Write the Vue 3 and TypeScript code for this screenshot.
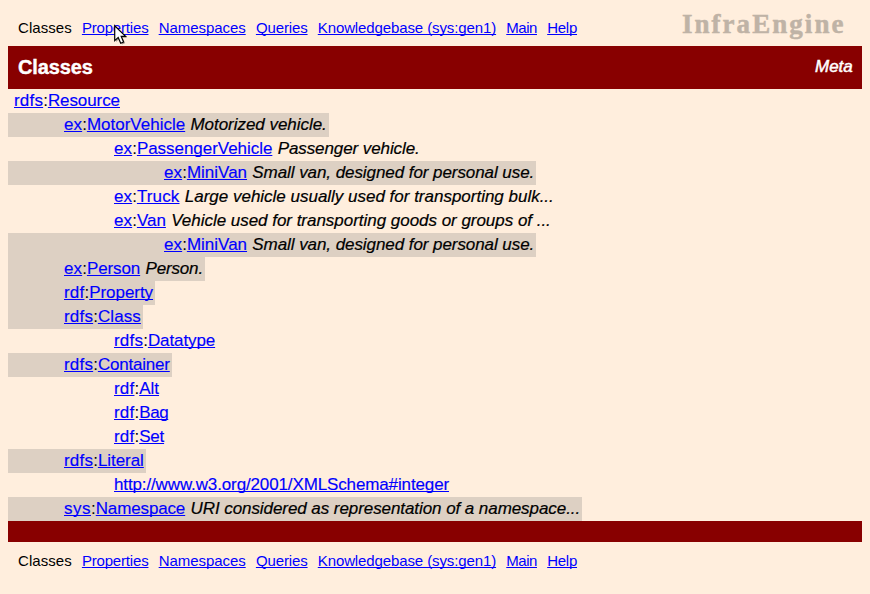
<script setup lang="ts">
interface NavItem {
  label: string
  tracking: number
  current?: boolean
}

interface ClassRow {
  prefix?: string
  name: string
  level: number
  tracking?: number
  comment?: string
  commentTracking?: number
}

const navItems: NavItem[] = [
  { label: 'Classes', tracking: 0.05, current: true },
  { label: 'Properties', tracking: -0.18 },
  { label: 'Namespaces', tracking: -0.05 },
  { label: 'Queries', tracking: -0.12 },
  { label: 'Knowledgebase (sys:gen1)', tracking: -0.11 },
  { label: 'Main', tracking: -0.45 },
  { label: 'Help', tracking: -0.25 },
]

const prefixTracking: Record<string, number> = { rdfs: 0.2, rdf: 0.2, ex: 0.1, sys: 0.5 }

const rows: ClassRow[] = [
  { prefix: 'rdfs', name: 'Resource', level: 0, tracking: -0.08 },
  { prefix: 'ex', name: 'MotorVehicle', level: 1, comment: 'Motorized vehicle.', commentTracking: -0.04 },
  { prefix: 'ex', name: 'PassengerVehicle', level: 2, tracking: -0.04, comment: 'Passenger vehicle.', commentTracking: -0.09 },
  { prefix: 'ex', name: 'MiniVan', level: 3, comment: 'Small van, designed for personal use.', commentTracking: -0.07 },
  { prefix: 'ex', name: 'Truck', level: 2, tracking: 0.15, comment: 'Large vehicle usually used for transporting bulk...', commentTracking: -0.01 },
  { prefix: 'ex', name: 'Van', level: 2, comment: 'Vehicle used for transporting goods or groups of ...', commentTracking: -0.03 },
  { prefix: 'ex', name: 'MiniVan', level: 3, comment: 'Small van, designed for personal use.', commentTracking: -0.07 },
  { prefix: 'ex', name: 'Person', level: 1, tracking: -0.1, comment: 'Person.', commentTracking: -0.15 },
  { prefix: 'rdf', name: 'Property', level: 1, tracking: -0.05 },
  { prefix: 'rdfs', name: 'Class', level: 1, tracking: 0.1 },
  { prefix: 'rdfs', name: 'Datatype', level: 2, tracking: -0.1 },
  { prefix: 'rdfs', name: 'Container', level: 1, tracking: -0.2 },
  { prefix: 'rdf', name: 'Alt', level: 2 },
  { prefix: 'rdf', name: 'Bag', level: 2, tracking: -0.4 },
  { prefix: 'rdf', name: 'Set', level: 2, tracking: -0.2 },
  { prefix: 'rdfs', name: 'Literal', level: 1, tracking: -0.05 },
  { name: 'http://www.w3.org/2001/XMLSchema#integer', level: 2, tracking: -0.13 },
  { prefix: 'sys', name: 'Namespace', level: 1, tracking: -0.14, comment: 'URI considered as representation of a namespace...', commentTracking: -0.07 },
]

const tracked = (value = 0) => ({ letterSpacing: `${value}px` })
</script>

<template>
  <div class="page">
    <header class="top">
      <nav class="nav">
        <template v-for="item in navItems" :key="item.label">
          <span v-if="item.current" :style="tracked(item.tracking)">{{ item.label }}</span>
          <a v-else href="#" :style="tracked(item.tracking)">{{ item.label }}</a>
        </template>
      </nav>
      <div class="logo">InfraEngine</div>
    </header>
    <div class="band">
      <h1 class="title">Classes</h1>
      <em class="meta">Meta</em>
    </div>
    <main class="tree">
      <div
        v-for="(row, i) in rows"
        :key="i"
        class="row"
        :class="['level-' + row.level, { shaded: row.level % 2 === 1 }]"
      >
        <template v-if="row.prefix"><a href="#" :style="tracked(prefixTracking[row.prefix])">{{ row.prefix }}</a><span>:</span></template><a href="#" :style="tracked(row.tracking)">{{ row.name }}</a><em v-if="row.comment" class="comment" :style="tracked(row.commentTracking)">{{ row.comment }}</em>
      </div>
    </main>
    <div class="band closing"></div>
    <nav class="nav bottom">
      <template v-for="item in navItems" :key="item.label">
        <span v-if="item.current" :style="tracked(item.tracking)">{{ item.label }}</span>
        <a v-else href="#" :style="tracked(item.tracking)">{{ item.label }}</a>
      </template>
    </nav>
    <svg class="cursor" width="16" height="23" viewBox="0 0 16 23">
      <path class="cursor-shadow" d="M2 3V18L5.4 14.8L8 20.5L11 19.3L8.6 13.8H13Z" />
      <path class="cursor-body" d="M0.7 1.7V16.6L4.2 13.4L6.7 19.2L9.6 18L7.2 12.4H11.6Z" />
    </svg>
  </div>
</template>

<style>
body {
  margin: 0;
  background: #ffeedd;
}
</style>

<style scoped>
.page {
  box-sizing: border-box;
  height: 594px;
  padding: 0 8px;
  overflow: hidden;
  position: relative;
  background: #ffeedd;
  color: #000;
  font-family: "Liberation Sans", Arial, Helvetica, sans-serif;
}
a {
  color: #0000ff;
  text-decoration: underline;
  text-decoration-thickness: 1px;
  text-decoration-skip-ink: none;
  text-underline-offset: 1px;
}
.top {
  display: flex;
  justify-content: space-between;
  height: 46px;
}
.nav {
  display: flex;
  gap: 10.2px;
  padding: 18px 0 0 10px;
  font-size: 15px;
  line-height: 20px;
  white-space: nowrap;
}
.nav.bottom {
  padding-top: 9px;
}
.logo {
  padding: 8px 16.5px 0 0;
  font-family: "Liberation Serif", "Times New Roman", serif;
  font-size: 27px;
  font-weight: bold;
  line-height: 32px;
  letter-spacing: 2.05px;
  color: #bfb3a6;
  -webkit-text-stroke: 0.5px #bfb3a6;
}
.band {
  box-sizing: border-box;
  display: flex;
  align-items: center;
  justify-content: space-between;
  height: 43px;
  padding: 0 9.5px 2px 10px;
  background: #880000;
  color: #fff;
}
.band.closing {
  height: 21px;
}
.title {
  margin: 0;
  font-size: 20px;
  line-height: 24px;
  letter-spacing: -0.12px;
  -webkit-text-stroke: 0.4px #fff;
}
.meta {
  font-size: 17px;
  line-height: 20px;
  letter-spacing: -0.1px;
  -webkit-text-stroke: 0.5px #fff;
}
.tree {
  display: flex;
  flex-direction: column;
  align-items: flex-start;
}
.row {
  box-sizing: border-box;
  display: flex;
  height: 24px;
  padding-right: 2px;
  font-size: 17px;
  line-height: 24px;
  white-space: nowrap;
}
.row a {
  -webkit-text-stroke: 0.15px #0000ff;
}
.level-0 {
  padding-left: 6px;
}
.level-1 {
  padding-left: 56px;
}
.level-2 {
  padding-left: 106px;
}
.level-3 {
  padding-left: 156px;
}
.shaded {
  background: #ddd0c3;
}
.comment {
  margin-left: 5.3px;
  -webkit-text-stroke: 0.2px #000;
}
.cursor {
  position: absolute;
  left: 114px;
  top: 24px;
}
.cursor-shadow {
  fill: #000;
  opacity: 0.35;
}
.cursor-body {
  fill: #fff;
  stroke: #000;
  stroke-width: 1.2;
}
</style>
